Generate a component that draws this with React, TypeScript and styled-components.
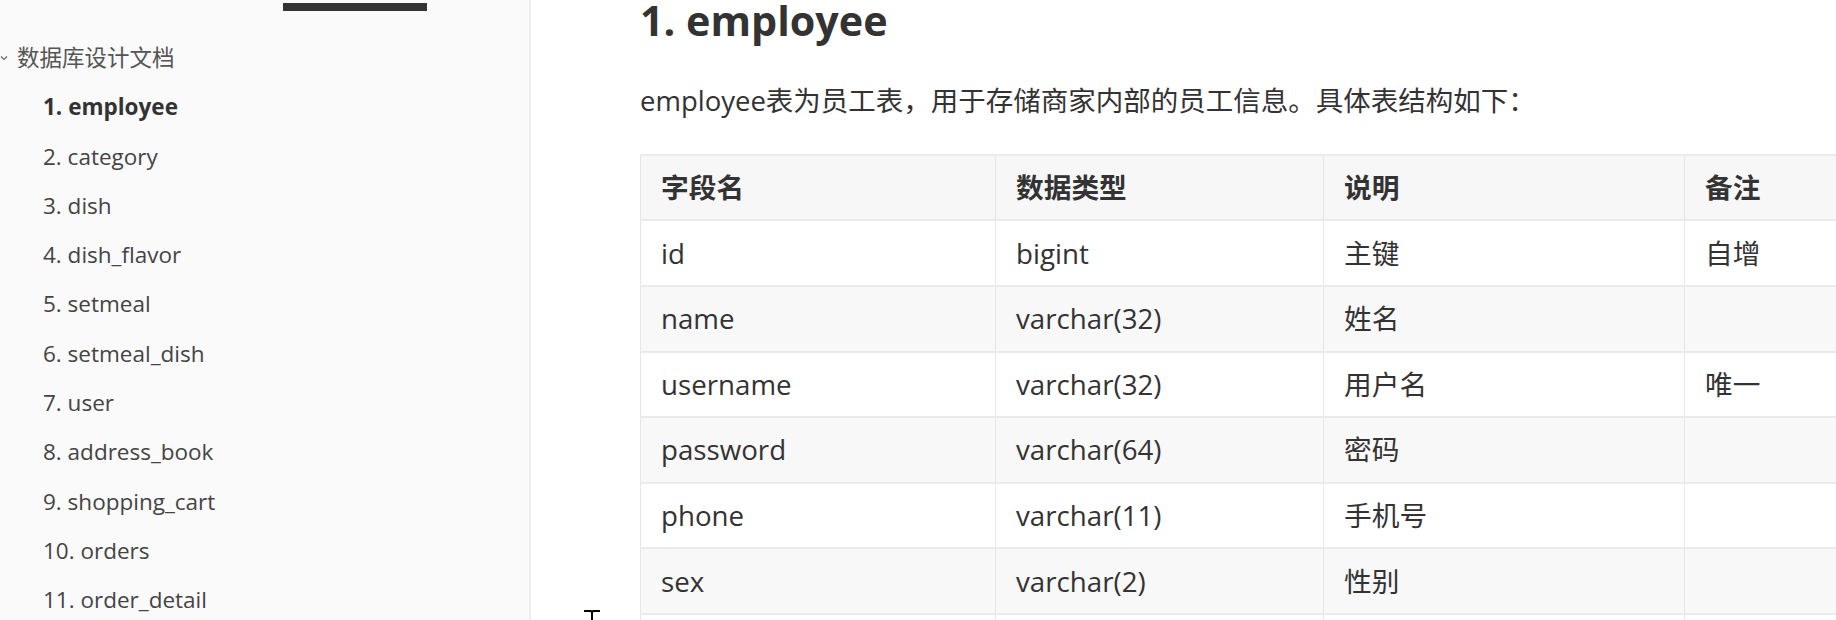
import React from "react";
import styled, { createGlobalStyle } from "styled-components";

const GlobalStyle = createGlobalStyle`
  html, body { margin: 0; padding: 0; background: #ffffff; }
  body { font-family: "Open Sans", "Noto Sans CJK SC", sans-serif; color: #333; }
`;

const Page = styled.div`
  display: flex;
  width: 1836px;
  height: 620px;
  overflow: hidden;
`;

const Sidebar = styled.aside`
  width: 529px;
  flex-shrink: 0;
  background: #fafafa;
  border-right: 2px solid #eeeeee;
  display: flex;
  flex-direction: column;
`;

const TabBar = styled.div`
  box-sizing: border-box;
  height: 11px;
  padding: 3px 0 0 283px;
`;

const TabIndicator = styled.div`
  width: 144px;
  height: 8px;
  background: #333333;
`;

const Outline = styled.nav`
  padding-top: 22px;
  display: flex;
  flex-direction: column;
`;

const OutlineRow = styled.div<{ $child?: boolean; $active?: boolean }>`
  display: flex;
  align-items: center;
  gap: 9px;
  height: 49.3px;
  line-height: 49.3px;
  font-size: 22.5px;
  white-space: nowrap;
  padding-left: ${(p) => (p.$child ? "43px" : "0px")};
  color: ${(p) => (p.$active ? "#333" : p.$child ? "#444" : "#555")};
  font-weight: ${(p) => (p.$active ? 700 : 400)};
`;

const Chevron = styled.svg`
  width: 8px;
  height: 6px;
  flex-shrink: 0;
`;

const Main = styled.main`
  position: relative;
  flex: 1;
  min-width: 0;
  padding-left: 109px;
  overflow: hidden;
`;

const Heading = styled.h3`
  margin: 0;
  font-size: 41.3px;
  line-height: 1;
  font-weight: 700;
  color: #333;
  white-space: nowrap;
`;

const Para = styled.p`
  margin: 38px 0 0;
  font-size: 27.5px;
  line-height: 43.2px;
  color: #333;
  white-space: nowrap;
`;

const Table = styled.table`
  margin-top: 31px;
  border-collapse: collapse;
  table-layout: fixed;
  width: 1344px;
  font-size: 27.7px;
  color: #333;
`;

const HeadRow = styled.tr`
  background: #f7f7f7;
`;

const BodyRow = styled.tr<{ $shade: boolean }>`
  background: ${(p) => (p.$shade ? "#f8f8f8" : "#ffffff")};
`;

const Th = styled.th`
  padding: 10.4px 20px;
  line-height: 43.2px;
  text-align: left;
  font-weight: 700;
  border-left: 1px solid #e6e6e6;
  border-right: 1px solid #e6e6e6;
  border-top: 2px solid #ebebeb;
  border-bottom: 2px solid #ebebeb;
  white-space: nowrap;
`;

const Td = styled.td`
  padding: 10.2px 20px;
  line-height: 43.2px;
  height: 43.2px;
  text-align: left;
  font-weight: 400;
  border-left: 1px solid #e6e6e6;
  border-right: 1px solid #e6e6e6;
  border-top: 2px solid #ebebeb;
  border-bottom: 2px solid #ebebeb;
  white-space: nowrap;
`;

const Cursor = styled.svg`
  position: absolute;
  left: 52px;
  top: 609px;
  width: 18px;
  height: 14px;
`;

const outline = [
  "1. employee",
  "2. category",
  "3. dish",
  "4. dish_flavor",
  "5. setmeal",
  "6. setmeal_dish",
  "7. user",
  "8. address_book",
  "9. shopping_cart",
  "10. orders",
  "11. order_detail",
];

const rows: [string, string, string, string][] = [
  ["id", "bigint", "主键", "自增"],
  ["name", "varchar(32)", "姓名", ""],
  ["username", "varchar(32)", "用户名", "唯一"],
  ["password", "varchar(64)", "密码", ""],
  ["phone", "varchar(11)", "手机号", ""],
  ["sex", "varchar(2)", "性别", ""],
  ["", "", "", ""],
];

export default function App() {
  return (
    <>
      <GlobalStyle />
      <Page>
        <Sidebar>
          <TabBar>
            <TabIndicator />
          </TabBar>
          <Outline>
            <OutlineRow>
              <Chevron viewBox="0 0 8 6">
                <polyline points="1,1.5 4,4.5 7,1.5" fill="none" stroke="#666" strokeWidth="1.2" />
              </Chevron>
              <span>数据库设计文档</span>
            </OutlineRow>
            {outline.map((t, i) => (
              <OutlineRow key={t} $child $active={i === 0}>
                {t}
              </OutlineRow>
            ))}
          </Outline>
        </Sidebar>
        <Main>
          <Heading>1. employee</Heading>
          <Para>employee表为员工表，用于存储商家内部的员工信息。具体表结构如下：</Para>
          <Table>
            <colgroup>
              <col style={{ width: 355 }} />
              <col style={{ width: 328 }} />
              <col style={{ width: 361 }} />
              <col style={{ width: 300 }} />
            </colgroup>
            <thead>
              <HeadRow>
                <Th>字段名</Th>
                <Th>数据类型</Th>
                <Th>说明</Th>
                <Th>备注</Th>
              </HeadRow>
            </thead>
            <tbody>
              {rows.map((r, i) => (
                <BodyRow key={i} $shade={i % 2 === 1}>
                  {r.map((c, j) => (
                    <Td key={j}>{c}</Td>
                  ))}
                </BodyRow>
              ))}
            </tbody>
          </Table>
          <Cursor viewBox="0 0 18 14">
            <path d="M1 2 H8 M10 2 H17 M8 2 Q9 2.5 9 4 V14 M10 2 Q9 2.5 9 4" fill="none" stroke="#000" strokeWidth="2" />
          </Cursor>
        </Main>
      </Page>
    </>
  );
}
